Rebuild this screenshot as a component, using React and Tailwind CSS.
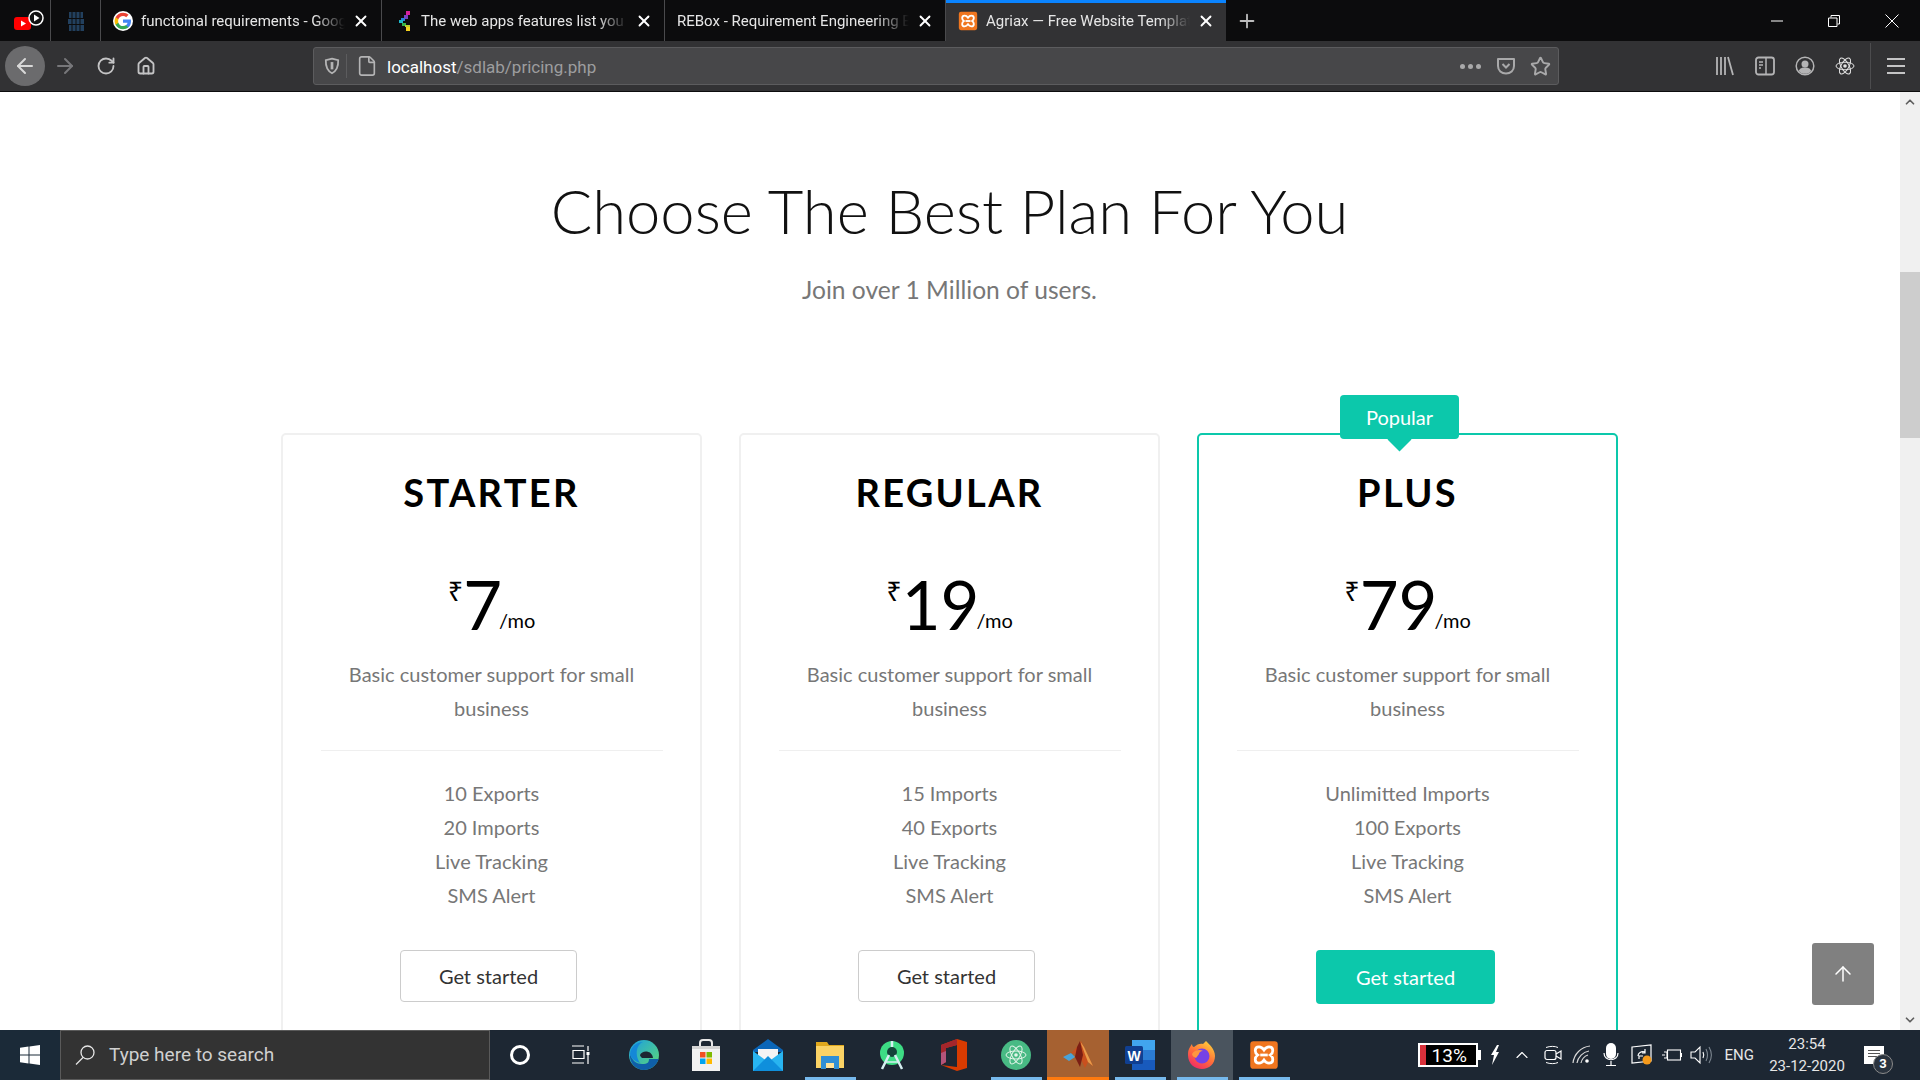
import { ArrowLeft, ArrowRight, ArrowUp, ChevronUp, ChevronDown, ChevronUp as Caret, File, Home, Plus, RotateCw, Star, X } from "lucide-react";

const tabs = [
  { title: "functoinal requirements - Google Search", icon: "google", w: "w-[281px]" },
  { title: "The web apps features list you need to know", icon: "pixel", w: "w-[283px]" },
  { title: "REBox - Requirement Engineering Box", icon: null, w: "w-[281px]" },
  { title: "Agriax — Free Website Template", icon: "xampp", w: "w-[280px]", active: true },
];

const plans = [
  { name: "STARTER", price: "7", features: ["10 Exports", "20 Imports", "Live Tracking", "SMS Alert"] },
  { name: "REGULAR", price: "19", features: ["15 Imports", "40 Exports", "Live Tracking", "SMS Alert"] },
  { name: "PLUS", price: "79", features: ["Unlimitted Imports", "100 Exports", "Live Tracking", "SMS Alert"], popular: true },
];

function GoogleIcon() {
  return (
    <svg viewBox="0 0 24 24" className="h-5 w-5 rounded-full bg-white">
      <path fill="#4285F4" d="M21.6 12.2c0-.7-.1-1.4-.2-2H12v3.9h5.4c-.2 1.2-.9 2.3-2 3v2.5h3.2c1.9-1.7 3-4.3 3-7.4z" />
      <path fill="#34A853" d="M12 22c2.7 0 5-.9 6.600-2.400l-3.200-2.500c-.9.600-2 1-3.400 1-2.600 0-4.800-1.800-5.600-4.100H3.100v2.600C4.700 19.800 8.100 22 12 22z" />
      <path fill="#FBBC05" d="M6.400 14c-.4-1.300-.4-2.700 0-4V7.400H3.100a10 10 0 0 0 0 9.200L6.400 14z" />
      <path fill="#EA4335" d="M12 6c1.500 0 2.800.5 3.800 1.500l2.900-2.900C16.900 3 14.700 2 12 2 8.100 2 4.700 4.200 3.100 7.400L6.400 10C7.200 7.700 9.400 6 12 6z" />
    </svg>
  );
}

function PixelIcon() {
  return (
    <svg viewBox="0 0 14 20" className="ml-[4px] mr-[1px] h-5 w-[14px]">
      <rect x="8" y="0" width="4" height="4" fill="#d6209c" />
      <rect x="6" y="4" width="4" height="4" fill="#7b3fc4" />
      <rect x="3" y="7" width="4" height="3" fill="#2a7fd8" />
      <rect x="1" y="9" width="4" height="3" fill="#1cb6c9" />
      <rect x="4" y="12" width="4" height="3" fill="#35b34a" />
      <rect x="7" y="14" width="5" height="2" fill="#b7d02c" />
      <rect x="8" y="16" width="4" height="4" fill="#f4d11c" />
    </svg>
  );
}

function XamppIcon({ size = "h-5 w-5" }) {
  return (
    <svg viewBox="0 0 24 24" className={size}>
      <rect x="1" y="1" width="22" height="22" rx="2.500" fill="#f0761f" />
      <path
        d="M8 5.500c-2 0-3 1.300-3 3 0 1.500.8 2.600 2 3.500-1.200.9-2 2-2 3.500 0 1.700 1 3 3 3 1.600 0 3-1 4-2.500 1 1.500 2.400 2.500 4 2.500 2 0 3-1.300 3-3 0-1.500-.8-2.600-2-3.500 1.200-.9 2-2 2-3.500 0-1.700-1-3-3-3-1.600 0-3 1-4 2.500-1-1.500-2.400-2.500-4-2.500z"
        fill="none"
        stroke="#fff"
        strokeWidth="2.200"
      />
      <path d="M9 12h6" stroke="#fff" strokeWidth="2.200" />
    </svg>
  );
}

function Tab({ tab }) {
  return (
    <div
      className={`relative flex h-full items-center pl-[12px] ${tab.w} ${
        tab.active ? "bg-[#323234]" : "border-r border-[#4a4a4c]"
      }`}
    >
      {tab.active ? <div className="absolute inset-x-0 top-0 h-[3px] bg-[#0a84ff]" /> : null}
      {tab.icon === "google" ? <GoogleIcon /> : null}
      {tab.icon === "pixel" ? <PixelIcon /> : null}
      {tab.icon === "xampp" ? <XamppIcon /> : null}
      <div
        className={`flex-1 overflow-hidden whitespace-nowrap pt-[2px] text-[15px] text-[#e6e6e6] [mask-image:linear-gradient(to_right,black_85%,transparent)] ${
          tab.icon ? "ml-[8px]" : "ml-0"
        }`}
      >
        {tab.title}
      </div>
      <X className="ml-[7px] mr-[11px] h-[18px] w-[18px] shrink-0 text-white" strokeWidth={2.500} />
    </div>
  );
}

function TabBar() {
  return (
    <div className="flex h-[41px] shrink-0 items-stretch bg-[#0c0c0d] font-['Roboto',sans-serif]">
      <div className="flex w-[51px] items-center justify-center border-r border-[#4a4a4c] pl-[8px]">
        <svg viewBox="0 0 34 24" className="h-[24px] w-[34px]">
          <rect x="2" y="8" width="17" height="13" rx="3" fill="#f00" />
          <path d="M9 11.500l5 3-5 3z" fill="#fff" />
          <circle cx="24" cy="9" r="7" fill="#111" stroke="#fff" strokeWidth="1.500" />
          <path d="M22 5.500l5.500 3.500-5.500 3.500z" fill="#fff" />
        </svg>
      </div>
      <div className="flex w-[50px] items-center justify-center border-r border-[#4a4a4c]">
        <svg viewBox="0 0 20 24" className="h-[24px] w-[20px]">
          <path d="M3 3h14v6H3zM2 10h16v5H2zM3 16h15v6H3z" fill="#22405e" />
          <path d="M6 3v19M10 3v19M14 3v19" stroke="#0c0c0d" strokeWidth="1" />
        </svg>
      </div>
      {tabs.map((tab) => (
        <Tab key={tab.title} tab={tab} />
      ))}
      <div className="flex w-[42px] items-center justify-center">
        <Plus className="h-[22px] w-[22px] text-[#bdbdbd]" strokeWidth={2} />
      </div>
      <div className="ml-auto flex items-center">
        <svg viewBox="0 0 12 12" className="mr-[45px] h-[12px] w-[12px]">
          <path d="M0 6h12" stroke="#fff" strokeWidth="1" />
        </svg>
        <svg viewBox="0 0 12 12" className="mr-[45px] h-[12px] w-[12px]">
          <path d="M3 2.500V.5h8.500V9H9.500M.5 3h8.500v8.500H.5z" fill="none" stroke="#fff" strokeWidth="1" />
        </svg>
        <svg viewBox="0 0 14 14" className="mr-[21px] h-[14px] w-[14px]">
          <path d="M.5.5l13 13M13.500.5l-13 13" stroke="#fff" strokeWidth="1" />
        </svg>
      </div>
    </div>
  );
}

function Toolbar() {
  return (
    <div className="flex h-[51px] shrink-0 items-center border-b border-[#0c0c0d] bg-[#323234] font-['Roboto',sans-serif]">
      <div className="ml-[5px] flex h-[40px] w-[40px] items-center justify-center rounded-full bg-[#6b6b6d]">
        <ArrowLeft className="h-[24px] w-[24px] text-[#d8d8d8]" strokeWidth={2} />
      </div>
      <ArrowRight className="ml-[8px] h-[24px] w-[24px] text-[#77777a]" strokeWidth={2} />
      <RotateCw className="ml-[19px] h-[20px] w-[20px] text-[#c4c4c5]" strokeWidth={2.200} />
      <Home className="ml-[20px] h-[20px] w-[20px] text-[#c4c4c5]" strokeWidth={2.200} />
      <div className="ml-[157px] flex h-[38px] w-[1246px] items-center rounded-[3px] border border-[#5c5c5e] bg-[#474749]">
        <svg viewBox="0 0 16 16" className="ml-[9px] h-[18px] w-[18px]">
          <path d="M8 1.500l5.500 1.300c.2 5-1.300 9.500-5.500 11.700C3.800 12.300 2.300 7.800 2.500 2.800z" fill="none" stroke="#b4b4b5" strokeWidth="1.600" />
          <path d="M8 4.500v6.500" stroke="#b4b4b5" strokeWidth="2.400" />
        </svg>
        <div className="ml-[5px] h-[24px] w-px bg-[#5c5c5e]" />
        <File className="ml-[9px] h-[22px] w-[22px] text-[#b4b4b5]" strokeWidth={1.800} />
        <span className="ml-[9px] pt-[3px] text-[17px]">
          <span className="text-white">localhost</span>
          <span className="text-[#9d9d9f]">/sdlab/pricing.php</span>
        </span>
        <div className="ml-auto flex gap-[3px]">
          <span className="h-[5px] w-[5px] rounded-full bg-[#a9a9aa]" />
          <span className="h-[5px] w-[5px] rounded-full bg-[#a9a9aa]" />
          <span className="h-[5px] w-[5px] rounded-full bg-[#a9a9aa]" />
        </div>
        <svg viewBox="0 0 20 20" className="ml-[15px] h-[20px] w-[20px]">
          <path d="M2 3h16v7c0 4.500-3.500 7.500-8 7.500S2 14.500 2 10z" fill="none" stroke="#a9a9aa" strokeWidth="2" strokeLinejoin="round" />
          <path d="M6.500 8l3.500 3.500L13.500 8" fill="none" stroke="#a9a9aa" strokeWidth="2" />
        </svg>
        <Star className="ml-[14px] mr-[7px] h-[21px] w-[21px] text-[#a9a9aa]" strokeWidth={2.200} />
      </div>
      <svg viewBox="0 0 20 20" className="ml-[156px] h-[20px] w-[20px]">
        <path d="M2 1v18M6 1v18M10 1v18M13 1l5 18" stroke="#b4b4b5" strokeWidth="1.800" fill="none" />
      </svg>
      <svg viewBox="0 0 20 20" className="ml-[20px] h-[20px] w-[20px]">
        <rect x="1" y="1.500" width="18" height="17" rx="2.500" fill="none" stroke="#b4b4b5" strokeWidth="1.800" />
        <path d="M11 1.500v17M4 6h4M4 9h4M4 12h2" stroke="#b4b4b5" strokeWidth="1.500" />
      </svg>
      <svg viewBox="0 0 20 20" className="ml-[20px] h-[20px] w-[20px]">
        <circle cx="10" cy="10" r="8.800" fill="none" stroke="#b4b4b5" strokeWidth="1.500" />
        <circle cx="10" cy="8" r="3.500" fill="#b4b4b5" />
        <path d="M3.800 15c1-3 3.500-3.500 6.200-3.500s5.200.5 6.200 3.500c-3 3.800-9.400 3.800-12.400 0z" fill="#b4b4b5" />
      </svg>
      <svg viewBox="0 0 20 20" className="ml-[20px] h-[20px] w-[20px]">
        <g fill="none" stroke="#e4e4e4" strokeWidth="1">
          <ellipse cx="10" cy="10" rx="9" ry="3.800" />
          <ellipse cx="10" cy="10" rx="9" ry="3.800" transform="rotate(60 10 10)" />
          <ellipse cx="10" cy="10" rx="9" ry="3.800" transform="rotate(120 10 10)" />
        </g>
        <circle cx="10" cy="10" r="1.800" fill="#e4e4e4" />
      </svg>
      <div className="ml-[15px] h-[46px] w-px bg-[#4c4c4e]" />
      <div className="ml-[16px] flex w-[18px] flex-col gap-[5px]">
        <span className="h-[2px] bg-[#c4c4c5]" />
        <span className="h-[2px] bg-[#c4c4c5]" />
        <span className="h-[2px] bg-[#c4c4c5]" />
      </div>
    </div>
  );
}

function PlanCard({ plan }) {
  return (
    <div
      className={`relative flex h-[700px] w-[421px] shrink-0 flex-col items-center rounded-[5px] border-2 ${
        plan.popular ? "border-[#0cc8ab]" : "border-[#f0f0f0]"
      }`}
    >
      {plan.popular ? (
        <div className="absolute left-[141px] top-[-40px] flex h-[44px] w-[119px] items-center justify-center rounded-[4px] bg-[#0cc8ab] text-[20px] text-white">
          Popular
          <div className="absolute left-[51px] top-[36px] h-[17px] w-[17px] rotate-45 bg-[#0cc8ab]" />
        </div>
      ) : null}
      <h3 className="mt-[32px] text-[38px] font-bold leading-[50px] tracking-[2.300px] text-black">{plan.name}</h3>
      <div className="mt-[47px] flex h-[74px] items-start text-black">
        <span className="mt-[12px] font-['Noto_Sans',sans-serif] text-[27px] leading-[30px]">₹</span>
        <span className="text-[67px] font-normal leading-[80px]">{plan.price}</span>
        <span className="-ml-[3px] mt-[41px] text-[20px] leading-[30px]">/mo</span>
      </div>
      <p className="mt-[19px] w-[300px] text-center text-[20px] leading-[34px] text-[#777777]">
        Basic customer support for small business
      </p>
      <div className="mt-[25px] h-[1px] w-[342px] bg-[#efefef]" />
      <ul className="mt-[25px] flex flex-col items-center text-[20px] leading-[34px] text-[#777777]">
        {plan.features.map((feature) => (
          <li key={feature}>{feature}</li>
        ))}
      </ul>
      {plan.popular ? (
        <button className="mr-[4px] mt-[38px] h-[54px] w-[179px] rounded-[4px] bg-[#0cc8ab] text-[20px] text-white">Get started</button>
      ) : (
        <button className="mr-[6px] mt-[38px] h-[52px] w-[177px] rounded-[4px] border border-[#cccccc] bg-white text-[20px] text-[#333333]">
          Get started
        </button>
      )}
    </div>
  );
}

function Scrollbar() {
  return (
    <div className="flex w-[20px] shrink-0 flex-col items-center justify-between bg-[#f0f0f0]">
      <ChevronUp className="mt-[3px] h-[14px] w-[14px] text-[#606060]" strokeWidth={3} />
      <div className="absolute right-0 top-[180px] h-[166px] w-[20px] bg-[#cdcdcd]" />
      <ChevronDown className="mb-[3px] h-[14px] w-[14px] text-[#606060]" strokeWidth={3} />
    </div>
  );
}

function TaskItem({ children, bar, bg = "" }) {
  return (
    <div className={`relative flex h-full w-[62px] items-center justify-center ${bg}`}>
      {children}
      {bar ? <div className={`absolute bottom-0 h-[3px] ${bar}`} /> : null}
    </div>
  );
}

function EdgeIcon() {
  return (
    <svg viewBox="0 0 32 32" className="h-[32px] w-[32px]">
      <defs>
        <linearGradient id="edgeTop" x1="0" y1="0" x2="1" y2="1">
          <stop offset="0" stopColor="#1b9de2" />
          <stop offset="1" stopColor="#5fdc72" />
        </linearGradient>
      </defs>
      <circle cx="16" cy="16" r="15" fill="url(#edgeTop)" />
      <path d="M31 19c-2 8-9 12-15 12C8 31 1 24 2 15c2 7 7 10 12 10 6 0 7-2 7-5h10z" fill="#0f5fa8" />
      <path d="M12 16c2-5 12-5 13 3H14c-1-1-2-2-2-3z" fill="#1d2733" />
      <path d="M2 15C3 7 9 3 15 3c-6 2-9 12-3 21C6 22 3 19 2 15z" fill="#1488d8" />
    </svg>
  );
}

function StoreIcon() {
  return (
    <svg viewBox="0 0 30 32" className="h-[32px] w-[30px]">
      <path d="M9 7V4c0-2 1-3 3-3h6c2 0 3 1 3 3v3" fill="none" stroke="#e8e8e8" strokeWidth="2" />
      <path d="M1 7h28v25H1z" fill="#f2f2f2" />
      <path d="M1 7h28v3H1z" fill="#d4d4d4" />
      <rect x="9" y="13" width="5.500" height="5.500" fill="#f25022" />
      <rect x="15.500" y="13" width="5.500" height="5.500" fill="#7fba00" />
      <rect x="9" y="19.500" width="5.500" height="5.500" fill="#00a4ef" />
      <rect x="15.500" y="19.500" width="5.500" height="5.500" fill="#ffb900" />
    </svg>
  );
}

function MailIcon() {
  return (
    <svg viewBox="0 0 30 32" className="h-[32px] w-[30px]">
      <path d="M0 11L15 0l15 11v2H0z" fill="#0a66b8" />
      <path d="M5 10h20v8l-10 6-10-6z" fill="#f4f4f4" />
      <path d="M0 12l15 11 15-11v20H0z" fill="#28b4f0" />
      <path d="M0 32l15-15 15 15z" fill="#0f8fdc" />
    </svg>
  );
}

function ExplorerIcon() {
  return (
    <svg viewBox="0 0 28 28" className="h-[28px] w-[28px]">
      <path d="M0 1h11l2 3h15v23H0z" fill="#e0a81d" />
      <path d="M0 5h28v22H0z" fill="#fbd365" />
      <path d="M5 15h18v13h-5v-6h-8v6H5z" fill="#2f8fd6" />
      <rect x="10" y="22" width="8" height="5" fill="#ffe39a" />
    </svg>
  );
}

function AndroidStudioIcon() {
  return (
    <svg viewBox="0 0 28 32" className="h-[32px] w-[28px]">
      <circle cx="14" cy="14" r="12" fill="#3ddc84" />
      <circle cx="14" cy="13" r="5" fill="#14443a" />
      <path d="M14 2v6M11 16L4 30M17 16l7 14" stroke="#d6eef0" strokeWidth="2.500" fill="none" />
      <path d="M7 23h14" stroke="#d6eef0" strokeWidth="1.500" />
    </svg>
  );
}

function OfficeIcon() {
  return (
    <svg viewBox="0 0 26 32" className="h-[32px] w-[26px]">
      <path d="M0 6l16-6 10 3v26l-10 3-16-6 16 2V6L5 9v14l-5 3z" fill="#d83b01" />
      <path d="M0 6l16-6v6L5 9v14l-5 3z" fill="#a4262c" />
      <path d="M0 14l5-2v11l-5 3z" fill="#b3547a" />
    </svg>
  );
}

function AtomIcon() {
  return (
    <svg viewBox="0 0 30 30" className="h-[30px] w-[30px]">
      <circle cx="15" cy="15" r="15" fill="#48ba84" />
      <g fill="none" stroke="#e4f5ea" strokeWidth="1">
        <ellipse cx="15" cy="15" rx="10" ry="4" />
        <ellipse cx="15" cy="15" rx="10" ry="4" transform="rotate(60 15 15)" />
        <ellipse cx="15" cy="15" rx="10" ry="4" transform="rotate(120 15 15)" />
      </g>
      <circle cx="15" cy="15" r="1.800" fill="#e4f5ea" />
    </svg>
  );
}

function MatlabIcon() {
  return (
    <svg viewBox="0 0 30 30" className="h-[30px] w-[30px]">
      <path d="M0 17l8-4 4 4-6 4z" fill="#4aa3d8" />
      <path d="M8 13l6-6 4-6 3 6 9 19-5-4-3 6-5-11-3-3z" fill="#c9501e" />
      <path d="M17 1l4 6 9 19-5-4z" fill="#e89b4a" />
      <path d="M14 7l3-6 3 14-3 12-5-10z" fill="#7a1e14" />
    </svg>
  );
}

function WordIcon() {
  return (
    <svg viewBox="0 0 30 30" className="h-[30px] w-[30px]">
      <rect x="7" y="0" width="23" height="10" fill="#41a5ee" />
      <rect x="7" y="10" width="23" height="10" fill="#2b7cd3" />
      <rect x="7" y="20" width="23" height="10" fill="#185abd" />
      <rect x="0" y="6" width="18" height="18" rx="1.500" fill="#103f91" />
      <text x="9" y="20.500" textAnchor="middle" fontSize="14" fontWeight="700" fill="#fff" fontFamily="Liberation Sans, sans-serif">
        W
      </text>
    </svg>
  );
}

function FirefoxIcon() {
  return (
    <svg viewBox="0 0 30 30" className="h-[30px] w-[30px]">
      <defs>
        <linearGradient id="foxBody" x1="0.8" y1="0" x2="0.2" y2="1">
          <stop offset="0" stopColor="#ffd23a" />
          <stop offset="0.5" stopColor="#ff7139" />
          <stop offset="1" stopColor="#f0246a" />
        </linearGradient>
      </defs>
      <path d="M2 9c1-2 2-4 3-5 0 2 1 3 2 3 3-3 7-4 9-3l3-3c3 3 9 8 9 15 0 8-6 13-13 13S1 24 1 15c0-2 0-4 1-6z" fill="url(#foxBody)" />
      <circle cx="15" cy="16" r="7.500" fill="#7542e5" />
      <path d="M5 14c2-4 8-5 11-3-3 0-4 2-4 3l-3 4c-2-1-4-2-4-4z" fill="#ff9640" />
    </svg>
  );
}

function Taskbar() {
  return (
    <div className="flex h-[50px] shrink-0 items-stretch bg-[#1d2733] font-['Roboto',sans-serif]">
      <div className="flex w-[60px] items-center justify-center bg-[#1b2a38]">
        <svg viewBox="0 0 20 20" className="h-[20px] w-[20px]">
          <path d="M0 2.800L8.500 1.600V9.500H0zM9.500 1.500L20 0v9.500H9.500zM0 10.500h8.500v7.900L0 17.200zM9.500 10.500H20V20L9.500 18.500z" fill="#fff" />
        </svg>
      </div>
      <div className="flex w-[430px] items-center border border-[#5a5a5a] bg-[#333333]">
        <svg viewBox="0 0 20 20" className="ml-[14px] h-[20px] w-[20px]">
          <circle cx="12.500" cy="7.500" r="6.500" fill="none" stroke="#e6e6e6" strokeWidth="1.300" />
          <path d="M8 12.500L1 19.500" stroke="#e6e6e6" strokeWidth="1.300" />
        </svg>
        <span className="ml-[14px] text-[19px] text-[#d0d0d0]">Type here to search</span>
      </div>
      <div className="-ml-[1px] flex items-stretch">
        <TaskItem>
          <div className="h-[20px] w-[20px] rounded-full border-[3px] border-white" />
        </TaskItem>
        <TaskItem>
          <svg viewBox="0 0 20 20" className="-ml-[4px] h-[20px] w-[20px]">
            <path d="M2 1h12M3 5.500h11v8H3zM2 18h12M18 1v5M18 10v9" fill="none" stroke="#fff" strokeWidth="1.200" />
            <rect x="16.500" y="7" width="3" height="3" fill="#fff" />
          </svg>
        </TaskItem>
        <TaskItem>
          <EdgeIcon />
        </TaskItem>
        <TaskItem>
          <StoreIcon />
        </TaskItem>
        <TaskItem>
          <MailIcon />
        </TaskItem>
        <TaskItem bar="w-[51px] bg-[#76b9ed]">
          <ExplorerIcon />
        </TaskItem>
        <TaskItem>
          <AndroidStudioIcon />
        </TaskItem>
        <TaskItem>
          <OfficeIcon />
        </TaskItem>
        <TaskItem bar="w-[51px] bg-[#76b9ed]">
          <AtomIcon />
        </TaskItem>
        <TaskItem bar="w-[62px] bg-[#ff7a0f]" bg="bg-[#a66131]">
          <MatlabIcon />
        </TaskItem>
        <TaskItem bar="w-[51px] bg-[#76b9ed]">
          <WordIcon />
        </TaskItem>
        <TaskItem bar="w-[51px] bg-[#76b9ed]" bg="bg-[#4a545e]">
          <FirefoxIcon />
        </TaskItem>
        <TaskItem bar="w-[51px] bg-[#76b9ed]">
          <XamppIcon size="h-[30px] w-[30px]" />
        </TaskItem>
      </div>
      <div className="ml-auto flex items-center text-white">
        <div className="flex h-[24px] w-[60px] items-center border-[2px] border-white bg-black">
          <div className="h-full w-[6px] bg-[#d8303a]" />
          <span className="ml-[6px] text-[19px] leading-none">13%</span>
        </div>
        <div className="h-[10px] w-[3px] bg-white" />
        <svg viewBox="0 0 10 20" className="ml-[9px] h-[20px] w-[10px]">
          <path d="M7 0L1 10h3l-2 10 7-13H6l3-7z" fill="#fff" />
        </svg>
        <Caret className="ml-[12px] h-[20px] w-[20px] text-white" strokeWidth={1.400} />
        <svg viewBox="0 0 20 20" className="ml-[11px] h-[20px] w-[20px]">
          <path d="M3 2.500C7 1 12 1 15 2.500M3 17.500c4 1.500 9 1.500 12 0" fill="none" stroke="#fff" strokeWidth="1" />
          <rect x="2" y="5.500" width="11" height="9" rx="2" fill="none" stroke="#fff" strokeWidth="1.200" />
          <path d="M13 9l5-3v8l-5-3" fill="none" stroke="#fff" strokeWidth="1.200" />
        </svg>
        <svg viewBox="0 0 20 20" className="ml-[9px] h-[20px] w-[20px]">
          <g fill="none" stroke="#d8d8d8" strokeWidth="1.200">
            <path d="M1 18C2 9 9 2 18 1" />
            <path d="M5 18c1-6 6-11 12-12" />
            <path d="M9 18c.5-3 3-7 7-8" />
          </g>
          <circle cx="15" cy="16" r="1.800" fill="#fff" />
        </svg>
        <svg viewBox="0 0 16 24" className="ml-[11px] h-[24px] w-[16px]">
          <rect x="3" y="0" width="10" height="16" rx="5" fill="#fff" />
          <path d="M1 10c0 9 14 9 14 0M8 18v4M3 22.500h10" fill="none" stroke="#fff" strokeWidth="1.200" />
        </svg>
        <svg viewBox="0 0 22 22" className="ml-[12px] h-[22px] w-[22px]">
          <path d="M1 3l19-2v16l-19 2z" fill="none" stroke="#fff" strokeWidth="1.200" />
          <path d="M7 12c0-3 3-5 7-4M14 5v4h-3M12 12h-4v3" fill="none" stroke="#fff" strokeWidth="1.200" />
          <circle cx="16" cy="16" r="4.500" fill="#f59a1b" />
        </svg>
        <svg viewBox="0 0 20 14" className="ml-[9px] h-[14px] w-[20px]">
          <path d="M0 7h3M2 4h3v6H2" fill="none" stroke="#fff" strokeWidth="1.100" />
          <rect x="5.500" y="2" width="13" height="10" fill="none" stroke="#fff" strokeWidth="1.100" />
          <rect x="19" y="5" width="1" height="4" fill="#fff" />
        </svg>
        <svg viewBox="0 0 22 20" className="ml-[8px] h-[20px] w-[22px]">
          <path d="M1 7h4l5-5v16l-5-5H1z" fill="none" stroke="#fff" strokeWidth="1.100" />
          <path d="M13 7c1 2 1 4 0 6" fill="none" stroke="#fff" strokeWidth="1.100" />
          <path d="M16 4c2 4 2 8 0 12M19 2c3 5 3 11 0 16" fill="none" stroke="#7d8791" strokeWidth="1.100" />
        </svg>
        <span className="ml-[13px] text-[15px] text-[#e6e6e6]">ENG</span>
        <div className="ml-[15px] flex w-[76px] flex-col items-center text-[15px] leading-[22px] text-[#e6e6e6]">
          <span>23:54</span>
          <span>23-12-2020</span>
        </div>
        <div className="relative ml-[19px] mr-[36px] h-[18px] w-[20px] bg-white">
          <div className="ml-[4px] mt-[4px] flex w-[12px] flex-col gap-[2px]">
            <span className="h-px bg-[#555]" />
            <span className="h-px bg-[#555]" />
            <span className="h-px bg-[#555]" />
          </div>
          <div className="absolute left-[9px] top-[8px] flex h-[20px] w-[20px] items-center justify-center rounded-full border border-[#8a8a8a] bg-[#2a333e] text-[13px] font-bold text-white">
            3
          </div>
        </div>
      </div>
    </div>
  );
}

export default function App() {
  return (
    <div className="flex h-screen w-[1920px] flex-col overflow-hidden bg-white">
      <TabBar />
      <Toolbar />
      <div className="relative flex min-h-0 flex-1">
        <main className="flex-1 overflow-hidden font-['Lato',sans-serif]">
          <div className="w-[1899px] pt-[78px] text-center">
            <h1 className="text-[61.500px] font-light leading-[80px] text-[#111111]">Choose The Best Plan For You</h1>
            <p className="mt-[23px] text-[24.600px] leading-[34px] text-[#777777]">Join over 1 Million of users.</p>
          </div>
          <div className="mt-[126px] flex w-[1899px] justify-center gap-[37px]">
            {plans.map((plan) => (
              <PlanCard key={plan.name} plan={plan} />
            ))}
          </div>
        </main>
        <Scrollbar />
        <div className="absolute left-[1812px] top-[851px] flex h-[62px] w-[62px] items-center justify-center rounded-[3px] bg-[#808080]">
          <ArrowUp className="h-[24px] w-[24px] text-white" strokeWidth={1.500} />
        </div>
      </div>
      <Taskbar />
    </div>
  );
}
